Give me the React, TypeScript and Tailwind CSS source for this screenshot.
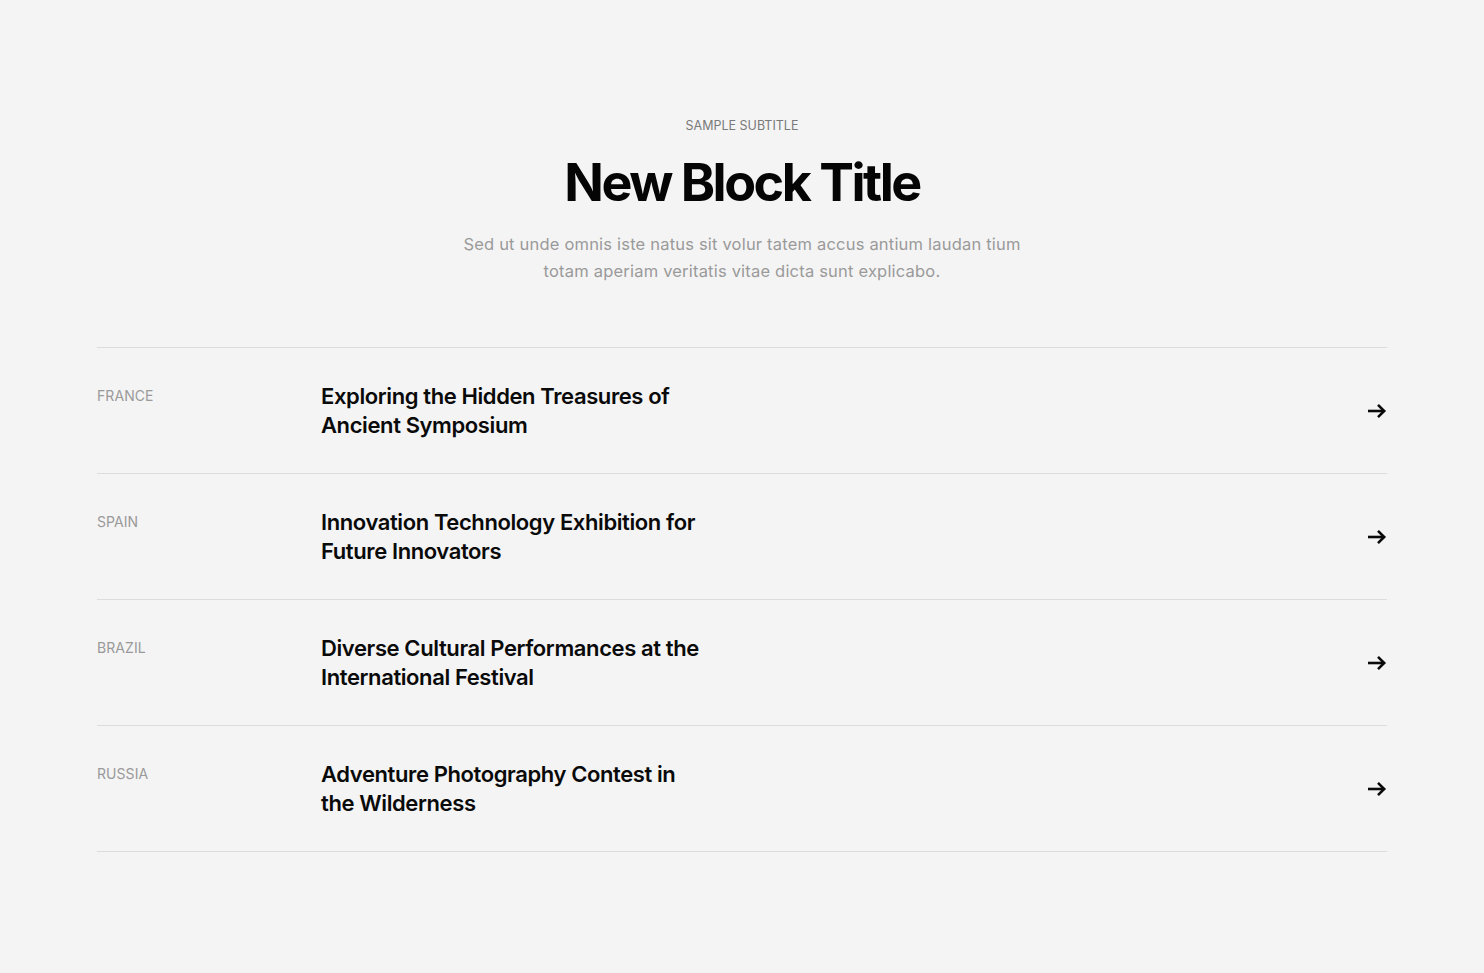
import React from "react";

const items = [
  { country: "FRANCE", lines: ["Exploring the Hidden Treasures of", "Ancient Symposium"] },
  { country: "SPAIN", lines: ["Innovation Technology Exhibition for", "Future Innovators"] },
  { country: "BRAZIL", lines: ["Diverse Cultural Performances at the", "International Festival"] },
  { country: "RUSSIA", lines: ["Adventure Photography Contest in", "the Wilderness"] },
];

function Arrow() {
  return (
    <svg width="20" height="16" viewBox="0 0 20 16" fill="none" stroke="#0a0a0a" strokeWidth="2.6" strokeLinecap="butt" strokeLinejoin="miter">
      <path d="M1 8h16" />
      <path d="M11 1.8L17.2 8 11 14.2" />
    </svg>
  );
}

export default function App() {
  return (
    <div
      className="min-h-[973px] w-full bg-[#f4f4f4] text-[#0a0a0a]"
      style={{ fontFamily: "Inter, 'Noto Sans', sans-serif" }}
    >
      <div className="mx-auto w-[1290px] pt-[118px]">
        <div className="flex flex-col items-center text-center">
          <div className="text-[12.5px] leading-[16px] tracking-[0em] text-[#7a7a7a]">SAMPLE SUBTITLE</div>
          <h1 className="mt-[20px] text-[52px] leading-[58px] font-bold tracking-[-0.048em] text-[#050505]">
            New Block Title
          </h1>
          <p className="mt-[19px] w-[640px] text-[16.5px] leading-[27px] tracking-[0.012em] text-[#9a9a9a]">
            Sed ut unde omnis iste natus sit volur tatem accus antium laudan tium
            <br />
            totam aperiam veritatis vitae dicta sunt explicabo.
          </p>
        </div>

        <div className="mt-[62px] border-t border-[#dcdcdc]">
          {items.map((it) => (
            <div key={it.country} className="flex items-center border-b border-[#dcdcdc] py-[34px]">
              <div className="w-[224px] self-start text-[14px] leading-[28px] tracking-[0.005em] text-[#9a9a9a]">
                {it.country}
              </div>
              <div className="flex-1 text-[22px] leading-[28.5px] font-semibold tracking-[-0.018em] text-[#0a0a0a]">
                {it.lines[0]}
                <br />
                {it.lines[1]}
              </div>
              <div className="flex items-center justify-end">
                <Arrow />
              </div>
            </div>
          ))}
        </div>
      </div>
    </div>
  );
}
